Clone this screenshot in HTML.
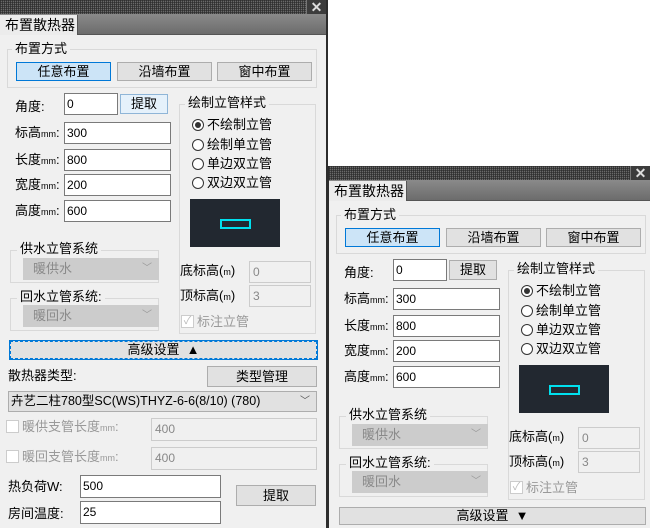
<!DOCTYPE html>
<html><head><meta charset="utf-8"><style>
*{box-sizing:border-box;margin:0;padding:0}
html,body{width:650px;height:528px;overflow:hidden}
body{background:#fff;position:relative;font-family:"Liberation Sans","Noto Sans CJK SC",sans-serif;font-size:13px;color:#000}
.p{position:absolute;left:0;top:0;width:328px;height:528px;background:#f0f0f0;border-right:2px solid #2d2d2d;overflow:hidden}
.p div,.p span{position:absolute}
.tb{left:0;top:0;width:326px;height:14px;background:#3c3c3c repeating-linear-gradient(90deg,#3c3c3c 0 1px,#6a6a6a 1px 2px)}
.tb2{left:0;top:0;width:326px;height:14px;background:repeating-linear-gradient(0deg,transparent 0 1px,rgba(40,40,40,.6) 1px 2px)}
.xb{left:306px;top:0;width:20px;height:14px;background:#3c3c3c;border-left:1px solid #777;color:#ddd;font-weight:bold;font-size:14px;line-height:14px;text-align:center}
.tr{left:0;top:14px;width:326px;height:21px;background:linear-gradient(#8a8a8a,#6c6c6c);border-bottom:1px solid #555}
.tab{left:0;top:15px;width:78px;height:20px;background:#ececec;border-right:1px solid #555;line-height:20px;padding-left:5px;font-size:14px}
.g{border:1px solid #d9d9d9}
.gl{background:#f0f0f0;padding:0 3px;line-height:14px;font-size:13px}
.b{border:1px solid #adadad;background:#e1e1e1;text-align:center;font-size:13px}
.bs{border:1px solid #0078d7;background:#cce4f7}
.in{border:1px solid #7a7a7a;background:#fff;padding-left:2px;line-height:20px;font-size:12px}
.dis{border:1px solid #ccc;background:#f0f0f0;color:#888;padding-left:3px;line-height:20px;font-size:12px}
.sel{background:#ccc;border:1px solid #ccc;color:#8a8a8a;padding-left:9px;line-height:20px}
.ar{right:6px;top:3px;color:#9a9a9a;font-size:10px;line-height:14px}
.l{line-height:16px;white-space:nowrap}
.mm{font-size:9px}
.rd{width:12px;height:12px;border:1px solid #333;border-radius:50%;background:#fff}
.rd i{position:absolute;left:2px;top:2px;width:6px;height:6px;border-radius:50%;background:#333}
.cb{width:13px;height:13px;border:1px solid #ccc;background:#fff}
</style></head><body>
<div class="p">
<div class="tb"></div><div class="tb2"></div>
<div class="xb">✕</div>
<div class="tr"></div>
<div class="tab">布置散热器</div>

<div class="g" style="left:7px;top:49px;width:310px;height:39px"></div>
<span class="gl" style="left:12px;top:42px">布置方式</span>
<div class="b bs" style="left:16px;top:62px;width:95px;height:19px;line-height:17px">任意布置</div>
<div class="b" style="left:117px;top:62px;width:95px;height:19px;line-height:17px">沿墙布置</div>
<div class="b" style="left:217px;top:62px;width:95px;height:19px;line-height:17px">窗中布置</div>

<span class="l" style="left:15px;top:99px">角度:</span>
<div class="in" style="left:64px;top:93px;width:54px;height:22px">0</div>
<div class="b" style="left:120px;top:94px;width:48px;height:20px;line-height:18px;background:#e5f1fb;border-color:#8fb5d7">提取</div>
<span class="l" style="left:15px;top:125px">标高<span class="mm" style="position:static">mm</span>:</span>
<div class="in" style="left:64px;top:122px;width:107px;height:22px">300</div>
<span class="l" style="left:15px;top:152px">长度<span class="mm" style="position:static">mm</span>:</span>
<div class="in" style="left:64px;top:149px;width:107px;height:22px">800</div>
<span class="l" style="left:15px;top:177px">宽度<span class="mm" style="position:static">mm</span>:</span>
<div class="in" style="left:64px;top:174px;width:107px;height:22px">200</div>
<span class="l" style="left:15px;top:203px">高度<span class="mm" style="position:static">mm</span>:</span>
<div class="in" style="left:64px;top:200px;width:107px;height:22px">600</div>

<div class="g" style="left:179px;top:104px;width:137px;height:230px"></div>
<span class="gl" style="left:185px;top:96px">绘制立管样式</span>
<div class="rd" style="left:192px;top:119px"><i></i></div><span class="l" style="left:207px;top:117px">不绘制立管</span>
<div class="rd" style="left:192px;top:139px"></div><span class="l" style="left:207px;top:137px">绘制单立管</span>
<div class="rd" style="left:192px;top:158px"></div><span class="l" style="left:207px;top:156px">单边双立管</span>
<div class="rd" style="left:192px;top:177px"></div><span class="l" style="left:207px;top:175px">双边双立管</span>
<div style="left:190px;top:199px;width:90px;height:48px;background:#222830"></div>
<div style="left:220px;top:219px;width:31px;height:10px;border:2px solid #00e0ee"></div>

<div class="g" style="left:10px;top:250px;width:149px;height:33px"></div>
<span class="gl" style="left:17px;top:242px">供水立管系统</span>
<div class="sel" style="left:23px;top:258px;width:136px;height:22px">暖供水<span class="ar">﹀</span></div>
<div class="g" style="left:10px;top:298px;width:149px;height:33px"></div>
<span class="gl" style="left:17px;top:290px">回水立管系统:</span>
<div class="sel" style="left:23px;top:305px;width:136px;height:22px">暖回水<span class="ar">﹀</span></div>

<span class="l" style="left:180px;top:263px">底标高(<span class="mm" style="position:static">m</span>)</span>
<div class="dis" style="left:249px;top:261px;width:62px;height:22px">0</div>
<span class="l" style="left:180px;top:288px">顶标高(<span class="mm" style="position:static">m</span>)</span>
<div class="dis" style="left:249px;top:285px;width:62px;height:22px">3</div>
<div class="cb" style="left:181px;top:315px;color:#bbb;font-size:11px;line-height:11px;text-align:center">✓</div>
<span class="l" style="left:197px;top:314px;color:#999">标注立管</span>

<div class="b" style="left:10px;top:341px;width:307px;height:18px;line-height:15px;border:1px dashed #0078d7;outline:1px solid #0078d7">高级设置 &nbsp;▲</div>

<span class="l" style="left:8px;top:368px">散热器类型:</span>
<div class="b" style="left:207px;top:366px;width:110px;height:21px;line-height:19px">类型管理</div>
<div class="b" style="left:8px;top:391px;width:309px;height:21px;line-height:19px;text-align:left;padding-left:2px;font-size:12.5px">卉艺二柱780型SC(WS)THYZ-6-6(8/10) (780)<span class="ar" style="color:#555">﹀</span></div>

<div class="cb" style="left:6px;top:420px"></div>
<span class="l" style="left:22px;top:419px;color:#999">暖供支管长度<span class="mm" style="position:static">mm</span>:</span>
<div class="dis" style="left:151px;top:418px;width:166px;height:23px">400</div>
<div class="cb" style="left:6px;top:450px"></div>
<span class="l" style="left:22px;top:449px;color:#999">暖回支管长度<span class="mm" style="position:static">mm</span>:</span>
<div class="dis" style="left:151px;top:447px;width:166px;height:23px">400</div>

<span class="l" style="left:8px;top:479px">热负荷W:</span>
<div class="in" style="left:80px;top:475px;width:141px;height:23px">500</div>
<div class="b" style="left:236px;top:485px;width:80px;height:21px;line-height:19px">提取</div>
<span class="l" style="left:8px;top:506px">房间温度:</span>
<div class="in" style="left:80px;top:501px;width:141px;height:23px">25</div>
</div>

<div style="position:absolute;left:327px;top:166px;width:323px;height:362px;overflow:hidden;border-left:2px solid #2d2d2d">
<div class="p" style="left:0;top:0;height:362px;border-right:none">
<div class="tb"></div><div class="tb2"></div>
<div class="xb" style="left:301px">✕</div>
<div class="tr"></div>
<div class="tab">布置散热器</div>
<div class="g" style="left:7px;top:49px;width:310px;height:39px"></div>
<span class="gl" style="left:12px;top:42px">布置方式</span>
<div class="b bs" style="left:16px;top:62px;width:95px;height:19px;line-height:17px">任意布置</div>
<div class="b" style="left:117px;top:62px;width:95px;height:19px;line-height:17px">沿墙布置</div>
<div class="b" style="left:217px;top:62px;width:95px;height:19px;line-height:17px">窗中布置</div>
<span class="l" style="left:15px;top:99px">角度:</span>
<div class="in" style="left:64px;top:93px;width:54px;height:22px">0</div>
<div class="b" style="left:120px;top:94px;width:48px;height:20px;line-height:18px">提取</div>
<span class="l" style="left:15px;top:125px">标高<span class="mm" style="position:static">mm</span>:</span>
<div class="in" style="left:64px;top:122px;width:107px;height:22px">300</div>
<span class="l" style="left:15px;top:152px">长度<span class="mm" style="position:static">mm</span>:</span>
<div class="in" style="left:64px;top:149px;width:107px;height:22px">800</div>
<span class="l" style="left:15px;top:177px">宽度<span class="mm" style="position:static">mm</span>:</span>
<div class="in" style="left:64px;top:174px;width:107px;height:22px">200</div>
<span class="l" style="left:15px;top:203px">高度<span class="mm" style="position:static">mm</span>:</span>
<div class="in" style="left:64px;top:200px;width:107px;height:22px">600</div>
<div class="g" style="left:179px;top:104px;width:137px;height:230px"></div>
<span class="gl" style="left:185px;top:96px">绘制立管样式</span>
<div class="rd" style="left:192px;top:119px"><i></i></div><span class="l" style="left:207px;top:117px">不绘制立管</span>
<div class="rd" style="left:192px;top:139px"></div><span class="l" style="left:207px;top:137px">绘制单立管</span>
<div class="rd" style="left:192px;top:158px"></div><span class="l" style="left:207px;top:156px">单边双立管</span>
<div class="rd" style="left:192px;top:177px"></div><span class="l" style="left:207px;top:175px">双边双立管</span>
<div style="left:190px;top:199px;width:90px;height:48px;background:#222830"></div>
<div style="left:220px;top:219px;width:31px;height:10px;border:2px solid #00e0ee"></div>
<div class="g" style="left:10px;top:250px;width:149px;height:33px"></div>
<span class="gl" style="left:17px;top:242px">供水立管系统</span>
<div class="sel" style="left:23px;top:258px;width:136px;height:22px">暖供水<span class="ar">﹀</span></div>
<div class="g" style="left:10px;top:298px;width:149px;height:33px"></div>
<span class="gl" style="left:17px;top:290px">回水立管系统:</span>
<div class="sel" style="left:23px;top:305px;width:136px;height:22px">暖回水<span class="ar">﹀</span></div>
<span class="l" style="left:180px;top:263px">底标高(<span class="mm" style="position:static">m</span>)</span>
<div class="dis" style="left:249px;top:261px;width:62px;height:22px">0</div>
<span class="l" style="left:180px;top:288px">顶标高(<span class="mm" style="position:static">m</span>)</span>
<div class="dis" style="left:249px;top:285px;width:62px;height:22px">3</div>
<div class="cb" style="left:181px;top:315px;color:#bbb;font-size:11px;line-height:11px;text-align:center">✓</div>
<span class="l" style="left:197px;top:314px;color:#999">标注立管</span>
<div class="b" style="left:10px;top:341px;width:307px;height:18px;line-height:16px">高级设置 &nbsp;▼</div>
</div>
</div>
</body></html>
